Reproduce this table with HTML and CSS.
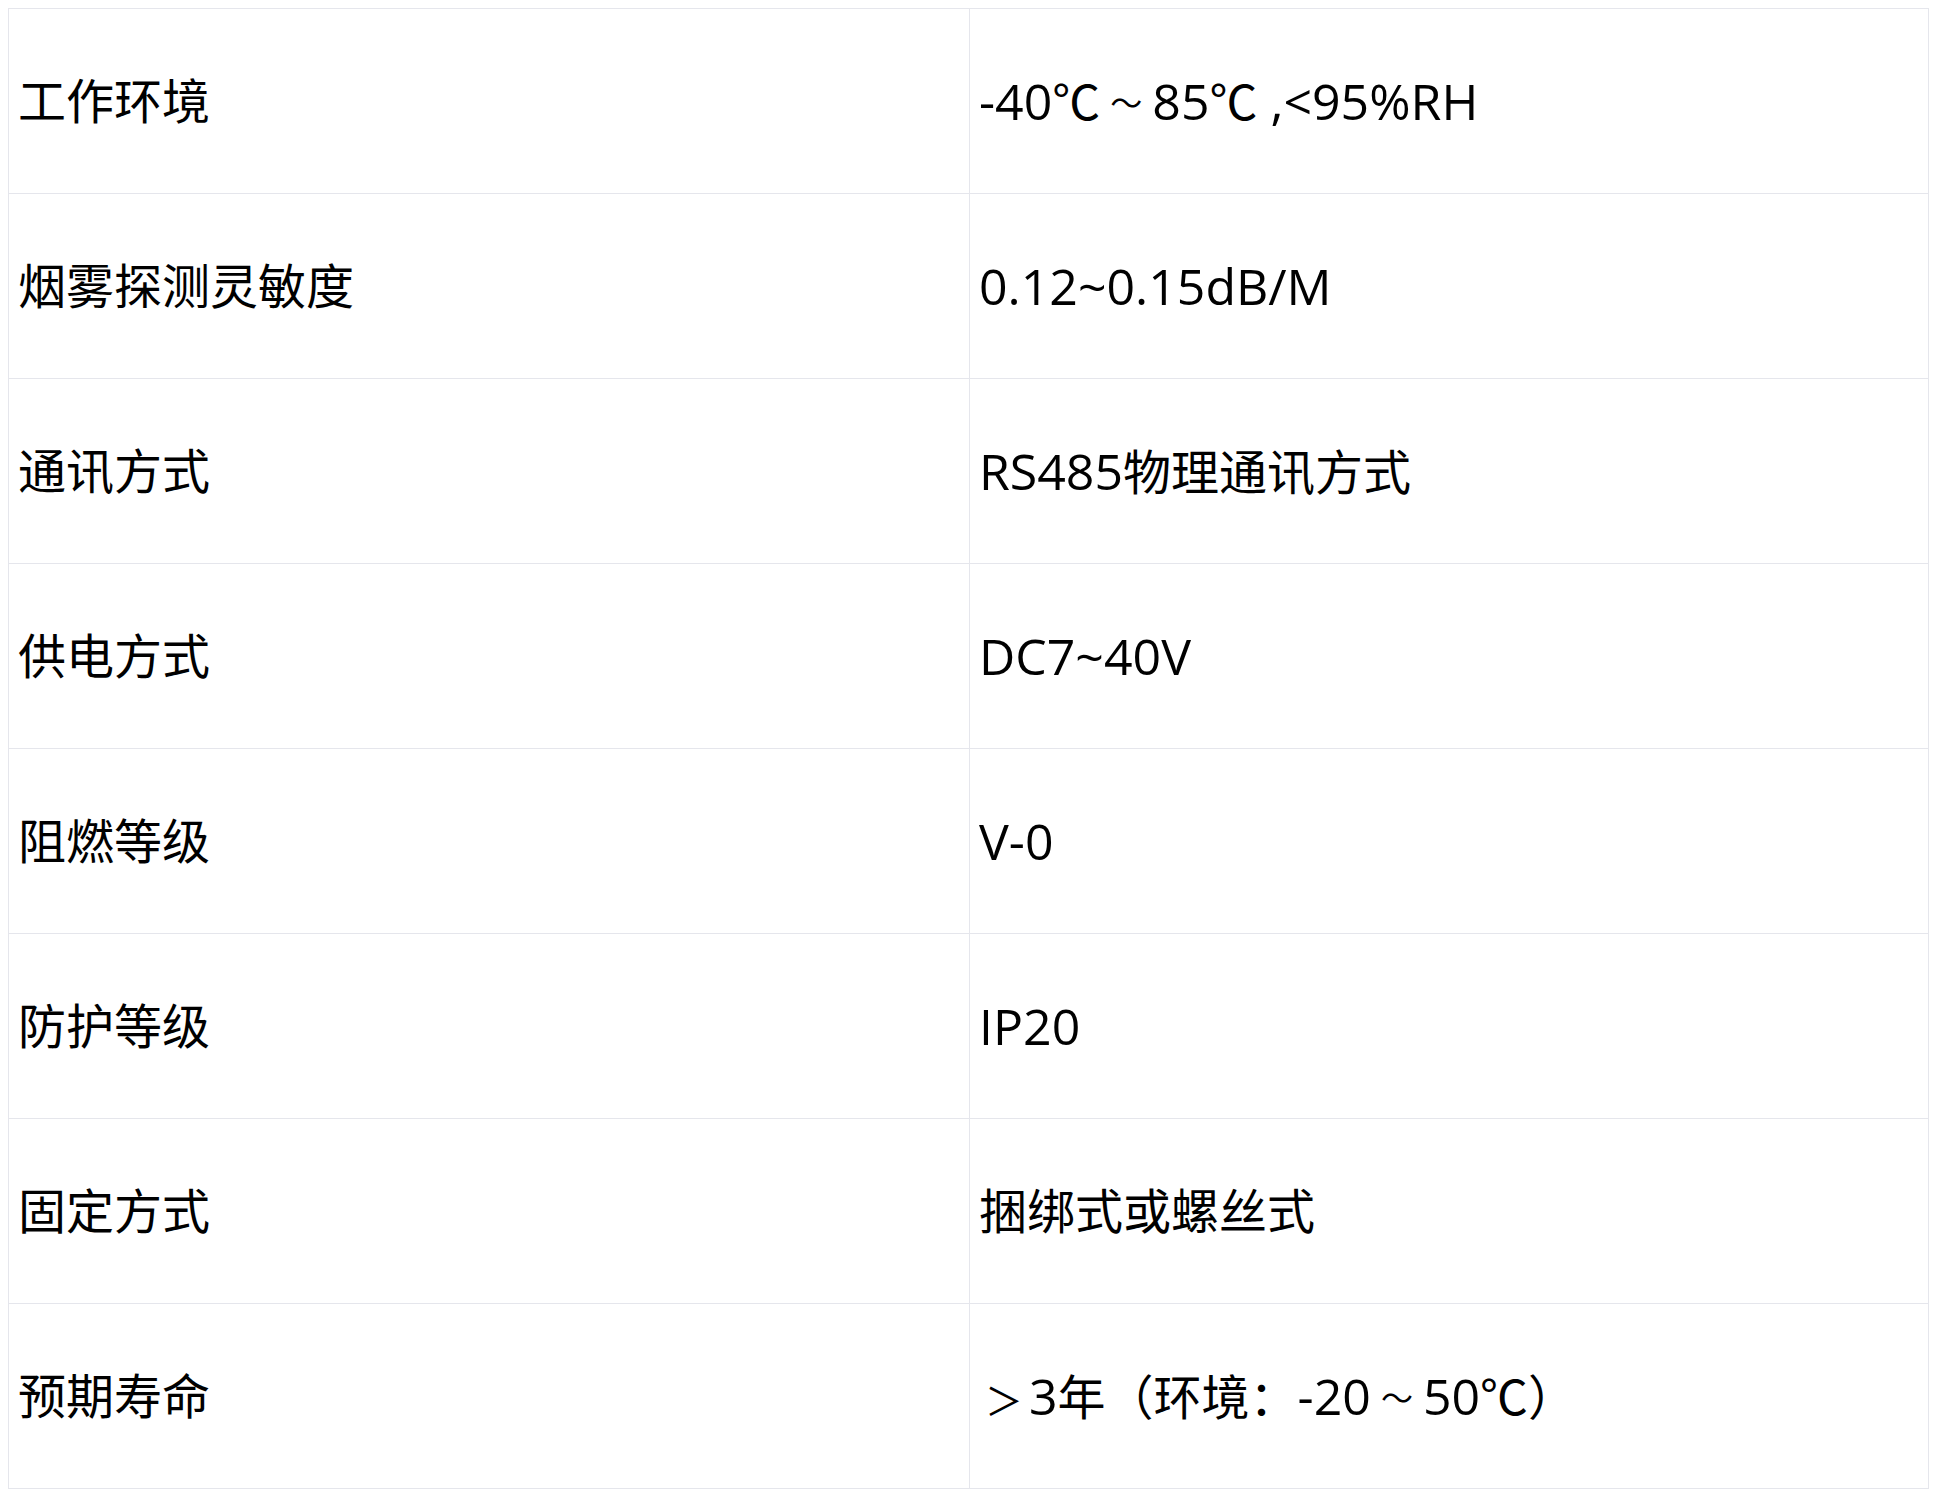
FILE: index.html
```html
<!DOCTYPE html>
<html lang="zh-CN">
<head>
<meta charset="utf-8">
<title>参数表</title>
<link rel="stylesheet" href="styles.css">
</head>
<body>
<table class="spec">
  <tbody>
    <tr><td class="key">工作环境</td><td class="val"><span class="lat">-40</span>℃<span class="fw tilde">～</span><span class="lat">85</span>℃<span class="lat"> ,&lt;95%RH</span></td></tr>
    <tr><td class="key">烟雾探测灵敏度</td><td class="val"><span class="lat">0.12~0.15dB/M</span></td></tr>
    <tr><td class="key">通讯方式</td><td class="val"><span class="lat">RS485</span>物理通讯方式</td></tr>
    <tr><td class="key">供电方式</td><td class="val"><span class="lat">DC7~40V</span></td></tr>
    <tr><td class="key">阻燃等级</td><td class="val"><span class="lat">V-0</span></td></tr>
    <tr><td class="key">防护等级</td><td class="val"><span class="lat">IP20</span></td></tr>
    <tr><td class="key">固定方式</td><td class="val">捆绑式或螺丝式</td></tr>
    <tr><td class="key">预期寿命</td><td class="val"><span class="fw gt">＞</span><span class="lat">3</span>年（环境：<span class="lat">-20</span><span class="fw tilde">～</span><span class="lat">50</span>℃）</td></tr>
  </tbody>
</table>
</body>
</html>
```
FILE: styles.css
```css
html, body {
  background: #ffffff;
}
body {
  margin: 8px;
  font-family: "Open Sans", "Noto Sans CJK SC", sans-serif;
  font-size: 48px;
  color: #000000;
}
.spec {
  border-collapse: collapse;
  width: 1921px;
  table-layout: fixed;
}
.spec tr {
  height: 185px;
}
.spec td {
  border: 1px solid #e5e6ec;
  padding: 0 9px;
  vertical-align: middle;
  line-height: 1.2;
  white-space: nowrap;
}
.spec .key {
  width: 942px;
}
.lat {
  font-size: 50px;
}
.fw {
  display: inline-block;
  width: 48px;
  text-align: center;
}
.fw.tilde {
  font-size: 32px;
  width: 52px;
  vertical-align: 5px;
}
.fw.gt {
  font-size: 38px;
  width: 50px;
  text-align: right;
  padding-right: 6px;
  box-sizing: border-box;
}
```
